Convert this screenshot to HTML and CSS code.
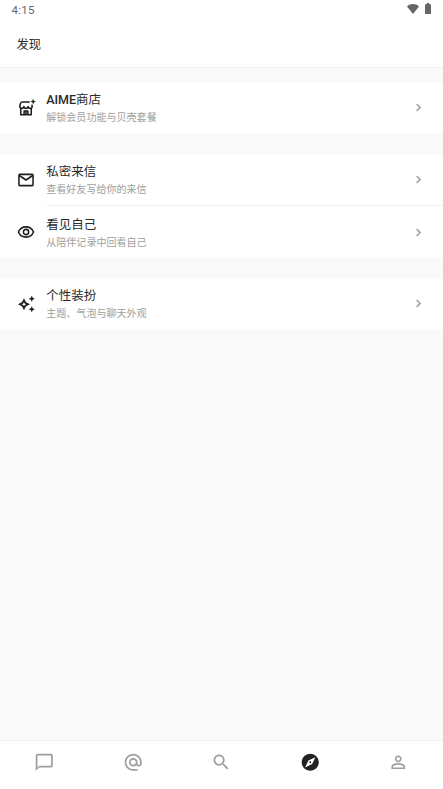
FILE: index.html
```html
<!DOCTYPE html>
<html lang="zh-CN">
<head>
<meta charset="utf-8">
<meta name="viewport" content="width=device-width, initial-scale=1">
<title>发现</title>
<link rel="stylesheet" href="styles.css">
</head>
<body>
<div class="app">
  <div class="status">
    <span class="clock">4:15</span>
    <svg class="wifi" viewBox="0 0 12 10"><path d="M0 2.400C3.500-.7 8.500-.7 12 2.400L6 10z"/></svg>
    <svg class="battery" viewBox="0 0 6 11"><path d="M1.700 0h2.600v1.200H5.400q.6 0 .6.600v8.600q0 .6-.6.600H.6q-.6 0-.6-.6V1.800q0-.6.6-.6h1.100z"/></svg>
  </div>
  <header class="header"><h1>发现</h1></header>
  <main class="content">
    <section class="group">
      <a class="row">
        <svg class="icon" viewBox="0 0 24 24"><path class="line" d="M17 4H7Q5.300 4 4.800 5.500L3.800 9q-.3 3.500 2.500 3.500T9.200 10q.2 2.500 2.800 2.500t2.800-2.500q.2 2.500 2.900 2.500T20.200 9l-.5-1.500M5 12.500V21h14v-8.500M9.500 21v-5h5v5M12 16v5"/><path d="M21.500-.2l1.100 2.500 2.500 1.100-2.500 1.100-1.100 2.500-1.100-2.500-2.500-1.100 2.500-1.100z"/></svg>
        <span class="text"><span class="title"><b>AIME</b>商店</span><span class="sub">解锁会员功能与贝壳套餐</span></span>
        <svg class="chevron" viewBox="0 0 24 24"><path d="M8.590 16.590L13.170 12 8.590 7.410 10 6l6 6-6 6z"/></svg>
      </a>
    </section>
    <section class="group pair">
      <a class="row">
        <svg class="icon" viewBox="0 0 24 24"><rect class="line" x="2.600" y="4.500" width="18.800" height="15" rx="1.200"/><path class="line" d="M3 6l9 6 9-6"/></svg>
        <span class="text"><span class="title">私密来信</span><span class="sub">查看好友写给你的来信</span></span>
        <svg class="chevron" viewBox="0 0 24 24"><path d="M8.590 16.590L13.170 12 8.590 7.410 10 6l6 6-6 6z"/></svg>
      </a>
      <a class="row">
        <svg class="icon" viewBox="0 0 24 24"><path class="line" d="M1.900 12C3.700 7.800 7.500 5.200 12 5.200S20.300 7.800 22.100 12C20.300 16.200 16.500 18.800 12 18.800S3.700 16.200 1.900 12z"/><circle class="line" cx="12" cy="12" r="3.500"/></svg>
        <span class="text"><span class="title">看见自己</span><span class="sub">从陪伴记录中回看自己</span></span>
        <svg class="chevron" viewBox="0 0 24 24"><path d="M8.590 16.590L13.170 12 8.590 7.410 10 6l6 6-6 6z"/></svg>
      </a>
    </section>
    <section class="group">
      <a class="row">
        <svg class="icon" viewBox="0 0 24 24"><path class="star" d="M9.300 7l1.800 3.500 3.500 1.800-3.500 1.800-1.800 3.500-1.800-3.500-3.500-1.800 3.500-1.800z"/><path d="M19.700 1l1.300 2.700L23.700 5l-2.700 1.300L19.700 9l-1.300-2.700L15.700 5l2.700-1.300zM19.700 15l1.300 2.700 2.700 1.300-2.700 1.300-1.300 2.700-1.300-2.700-2.700-1.300 2.700-1.300z"/></svg>
        <span class="text"><span class="title">个性装扮</span><span class="sub">主题、气泡与聊天外观</span></span>
        <svg class="chevron" viewBox="0 0 24 24"><path d="M8.590 16.590L13.170 12 8.590 7.410 10 6l6 6-6 6z"/></svg>
      </a>
    </section>
  </main>
  <nav class="tabs">
    <a class="tab"><svg viewBox="0 0 24 24"><path d="M20 2H4c-1.100 0-2 .9-2 2v18l4-4h14c1.100 0 2-.9 2-2V4c0-1.100-.9-2-2-2zm0 14H6l-2 2V4h16v12z"/></svg></a>
    <a class="tab"><svg viewBox="0 0 24 24"><path d="M12 2C6.480 2 2 6.480 2 12s4.480 10 10 10h5v-2h-5c-4.340 0-8-3.660-8-8s3.660-8 8-8 8 3.660 8 8v1.430c0 .79-.71 1.570-1.500 1.570s-1.500-.78-1.500-1.570V12c0-2.760-2.240-5-5-5s-5 2.240-5 5 2.240 5 5 5c1.380 0 2.640-.56 3.540-1.470.65.89 1.770 1.470 2.960 1.470 1.970 0 3.500-1.600 3.500-3.570V12c0-5.520-4.480-10-10-10zm0 13c-1.660 0-3-1.340-3-3s1.340-3 3-3 3 1.340 3 3-1.340 3-3 3z"/></svg></a>
    <a class="tab"><svg viewBox="0 0 24 24"><path d="M15.500 14h-.79l-.28-.27C15.410 12.590 16 11.110 16 9.500 16 5.910 13.090 3 9.500 3S3 5.910 3 9.500 5.910 16 9.500 16c1.610 0 3.090-.59 4.230-1.570l.27.28v.79l5 4.990L20.490 19l-4.990-5zm-6 0C7.010 14 5 11.990 5 9.500S7.010 5 9.500 5 14 7.010 14 9.500 11.990 14 9.500 14z"/></svg></a>
    <a class="tab active"><svg viewBox="0 0 24 24"><path d="M12 10.900c-.61 0-1.100.49-1.100 1.100s.49 1.100 1.100 1.100c.61 0 1.100-.49 1.100-1.100s-.49-1.100-1.100-1.100zM12 2C6.480 2 2 6.480 2 12s4.480 10 10 10 10-4.480 10-10S17.520 2 12 2zm2.190 12.190L6 18l3.810-8.190L18 6l-3.810 8.190z"/></svg></a>
    <a class="tab"><svg viewBox="0 0 24 24"><path d="M12 5.900c1.160 0 2.100.94 2.100 2.100s-.94 2.100-2.100 2.100S9.900 9.160 9.900 8s.94-2.100 2.100-2.100m0 9c2.970 0 6.100 1.460 6.100 2.100v1.100H5.900V17c0-.64 3.130-2.100 6.100-2.100M12 4C9.790 4 8 5.790 8 8s1.790 4 4 4 4-1.790 4-4-1.790-4-4-4zm0 9c-2.670 0-8 1.340-8 4v3h16v-3c0-2.660-5.330-4-8-4z"/></svg></a>
  </nav>
</div>
</body>
</html>
```
FILE: styles.css
```css
* { box-sizing: border-box; }
body {
  margin: 0;
  background: #fafafa;
  color: #2a2a2a;
  font-family: Roboto, "Noto Sans CJK SC", sans-serif;
}
.app { height: 789px; display: flex; flex-direction: column; }
svg { display: block; flex: none; overflow: visible; fill: currentColor; }
.status {
  height: 20px;
  padding: 0 12px 0 11.500px;
  display: flex;
  align-items: center;
  background: #fff;
  color: #686868;
}
.clock { flex: 1; padding-top: 1px; font-size: 11.500px; line-height: 19px; font-weight: 400; letter-spacing: .3px; }
.wifi, .battery { color: #666; }
.wifi { width: 12px; height: 10px; margin: -2px 6.500px 0 0; }
.battery { width: 6px; height: 11px; margin-top: -3px; }
.header {
  height: 48px;
  padding: 0 16.500px;
  background: #fff;
  border-bottom: 1px solid #f1f1f1;
}
h1 { margin: 0; font-size: 12.300px; line-height: 50px; font-weight: 400; }
.content { flex: 1; padding-top: 14.500px; }
.group { background: #fff; margin-bottom: 22px; }
.row { height: 50px; display: flex; align-items: center; padding: 0 17px 0 17.400px; }
.pair { height: 102px; }
.pair .row + .row { position: relative; margin-top: 2.500px; }
.pair .row + .row::before {
  content: "";
  position: absolute;
  top: -2px;
  left: 46px;
  right: 0;
  height: 1px;
  background: #f0f0f0;
}
.icon { width: 18px; height: 18px; color: #1f1f1f; }
.line, .star { fill: none; stroke: currentColor; stroke-width: 2.100; stroke-linejoin: round; }
.star { stroke-width: 2.400; stroke-linejoin: miter; }
.text { flex: 1; margin-left: 10.800px; padding-top: 2px; }
.title, .sub { display: block; white-space: nowrap; }
.title { font-size: 12.500px; line-height: 18px; font-weight: 400; }
.title b { font-weight: 500; }
.sub { margin-top: 1px; font-size: 10.050px; line-height: 16px; color: #a0a0a0; }
.chevron { width: 15px; height: 15px; margin-top: .500px; color: #9e9e9e; stroke: currentColor; stroke-width: .6; }
.tabs {
  height: 49.500px;
  padding-bottom: 6px;
  display: flex;
  background: #fff;
  border-top: 1px solid #f1f1f1;
}
.tab { flex: 1; display: flex; align-items: center; justify-content: center; color: #9e9e9e; }
.tab svg { width: 20.500px; height: 20.500px; }
.active { color: #212121; }
```
